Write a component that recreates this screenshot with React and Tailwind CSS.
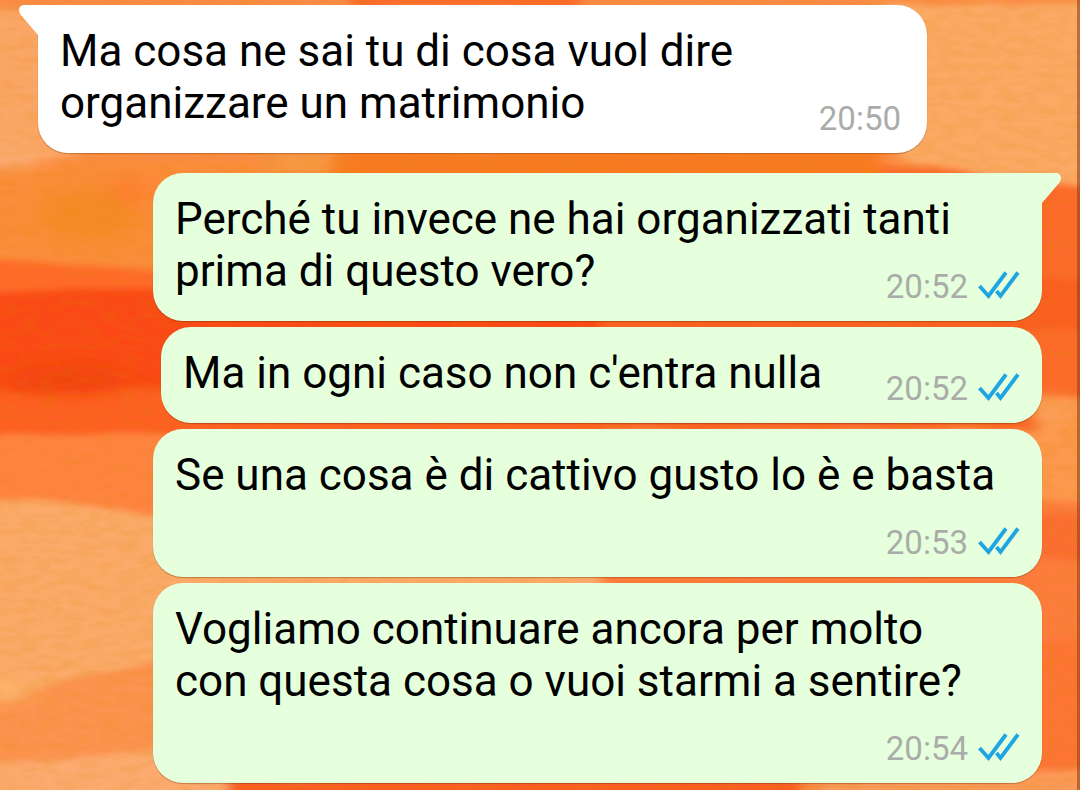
const messages = [
  {
    id: 1,
    from: "them",
    lines: ["Ma cosa ne sai tu di cosa vuol dire", "organizzare un matrimonio"],
    time: "20:50",
    tail: true,
  },
  {
    id: 2,
    from: "me",
    lines: ["Perché tu invece ne hai organizzati tanti", "prima di questo vero?"],
    time: "20:52",
    tail: true,
  },
  { id: 3, from: "me", lines: ["Ma in ogni caso non c'entra nulla"], time: "20:52", narrow: true },
  {
    id: 4,
    from: "me",
    lines: ["Se una cosa è di cattivo gusto lo è e basta"],
    time: "20:53",
    timeBelow: true,
  },
  {
    id: 5,
    from: "me",
    lines: ["Vogliamo continuare ancora per molto", "con questa cosa o vuoi starmi a sentire?"],
    time: "20:54",
    timeBelow: true,
  },
];

// Painted wallpaper behind the chat
function Wallpaper() {
  return (
    <svg
      className="absolute inset-0 -z-10 h-full w-full"
      viewBox="0 0 1080 790"
      preserveAspectRatio="none"
      aria-hidden="true"
    >
      <defs>
        <filter id="soft" x="-10%" y="-10%" width="120%" height="120%">
          <feTurbulence type="fractalNoise" baseFrequency="0.012 0.03" numOctaves="2" seed="4" result="n" />
          <feDisplacementMap in="SourceGraphic" in2="n" scale="10" result="d" />
          <feGaussianBlur in="d" stdDeviation="6 3" />
        </filter>
        <filter id="blot" x="-50%" y="-50%" width="200%" height="200%">
          <feGaussianBlur stdDeviation="14 8" />
        </filter>
        <filter id="grain" x="0" y="0" width="100%" height="100%">
          <feTurbulence type="fractalNoise" baseFrequency="0.05 0.14" numOctaves="4" seed="9" />
          <feColorMatrix values="0 0 0 0 0.7  0 0 0 0 0.25  0 0 0 0 0  0.9 0 0 0 -0.34" />
        </filter>
      </defs>
      <rect width="1080" height="790" fill="#fb8c45" />
      <g filter="url(#soft)">
        <path d="M-40 8H80V156L-40 168Z" fill="#fba666" />
        <path d="M-40 170L60 162H600V270H-40Z" fill="#fb8d3a" />
        <path d="M-40 258L160 270L600 280V450H-40Z" fill="#ff6a2c" />
        <path d="M-40 294L170 288L600 300V395L-40 392Z" fill="#fa4a12" />
        <path d="M-40 390H600V436H-40Z" fill="#fd6122" />
        <path d="M-40 435H600V520H-40Z" fill="#fe8440" />
        <path d="M-40 500L60 502L160 516H600V640L160 660L0 700H-40Z" fill="#fbaa69" />
        <path d="M-40 702L20 698L160 665H600V760H-40Z" fill="#fc934f" />
        <path d="M-40 764L160 752H300V800H-40Z" fill="#fcaa70" />
        <path d="M880 4H1120V186H1040L900 160Z" fill="#fba965" />
        <path d="M600 160L900 166L1120 190V400H600Z" fill="#fb6a2a" />
        <path d="M600 280H1120V330H600Z" fill="#fa5f22" />
        <path d="M600 398H1120V505H600Z" fill="#fd9850" />
        <path d="M600 405H1038V430H600Z" fill="#fa6124" />
        <path d="M600 502H1120V640H600Z" fill="#fd7c3c" />
        <path d="M600 516H1120V560H600Z" fill="#fb6e30" />
        <path d="M600 640H1120V775H600Z" fill="#fd7535" />
        <path d="M350 -10H580V6H350Z" fill="#fb6a2c" />
        <path d="M330 150H880V180H330Z" fill="#f97a24" />
        <path d="M230 778H800V800H230Z" fill="#fa5e20" />
        <path d="M820 784L1090 768V800H820Z" fill="#fb9a58" />
      </g>
      <g filter="url(#blot)">
        <ellipse cx="90" cy="215" rx="50" ry="26" fill="#f58a26" />
        <ellipse cx="130" cy="190" rx="22" ry="16" fill="#fe8030" />
        <ellipse cx="8" cy="160" rx="34" ry="7" fill="#f9b07c" />
        <ellipse cx="300" cy="162" rx="36" ry="8" fill="#f3a044" />
        <ellipse cx="70" cy="380" rx="60" ry="14" fill="#f24510" />
        <ellipse cx="0" cy="690" rx="34" ry="10" fill="#fbb56c" />
        <ellipse cx="1050" cy="412" rx="18" ry="16" fill="#fba05a" />
      </g>
      <rect width="1080" height="790" filter="url(#grain)" opacity="0.4" />
      <rect x="1077" width="3" height="790" fill="#8a3c12" opacity="0.55" />
    </svg>
  );
}

function ReadTicks() {
  return (
    <svg className="h-8 w-[42px]" viewBox="0 0 42 32" fill="none" role="img" aria-label="Letto">
      <g stroke="#1ea5e2" strokeWidth="3.8" strokeLinejoin="miter">
        <path d="M1.5 15L10.5 25L28 1.5" />
        <path d="M18.5 20L22.5 25L40 1.5" />
      </g>
    </svg>
  );
}

function Tail({ mine }) {
  return (
    <svg
      className={
        mine
          ? "absolute top-0 left-full h-[31px] w-5 -scale-x-100 text-[#e6ffdc]"
          : "absolute top-0 right-full h-[31px] w-5 text-white"
      }
      viewBox="0 0 20 31"
      fill="currentColor"
      aria-hidden="true"
    >
      <path d="M20 0H6C1.500 0 -0.500 5 2.500 9.500L20 30Z" />
    </svg>
  );
}

function Message({ message }) {
  const { from, lines, time, tail, timeBelow, narrow } = message;
  const mine = from === "me";

  let corners = "rounded-[30px]";
  if (tail) corners = mine ? "rounded-[30px] rounded-tr-none" : "rounded-[30px] rounded-tl-none";

  return (
    <li
      className={`relative flex max-w-full flex-col pt-5 pb-3.5 pl-[22px] shadow-[0_1px_1px_rgba(90,40,0,0.35)] ${corners} ${
        mine ? "self-end bg-[#e6ffdc] pr-[22px]" : "mb-3.5 self-start bg-white pr-[26px]"
      } ${narrow ? "w-[881px]" : "w-[889px]"}`}
    >
      {tail && <Tail mine={mine} />}
      <p className="text-[44px] leading-[52px] text-black">
        {lines.map((line) => (
          <span key={line} className="block w-fit">
            {line}
          </span>
        ))}
      </p>
      <div
        className={`flex items-center gap-2.5 self-end ${timeBelow ? "mt-[22px]" : "mt-[-30px]"}`}
      >
        <time className="text-[33px] leading-10 text-[#a9adaa]">{time}</time>
        {mine && <ReadTicks />}
      </div>
    </li>
  );
}

export default function App() {
  return (
    <main className="relative isolate min-h-screen overflow-hidden font-['Roboto',sans-serif]">
      <Wallpaper />
      <ul className="flex flex-col gap-1.5 px-[38px] pt-[5px] pb-[7px]">
        {messages.map((message) => (
          <Message key={message.id} message={message} />
        ))}
      </ul>
    </main>
  );
}
